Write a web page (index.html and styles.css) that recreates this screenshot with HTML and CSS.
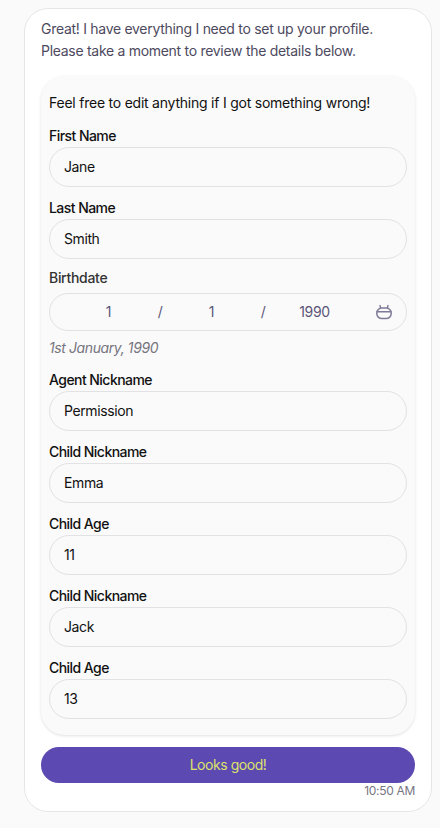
FILE: index.html
```html
<!DOCTYPE html>
<html lang="en">
<head>
  <meta charset="UTF-8">
  <meta name="viewport" content="width=device-width, initial-scale=1.0">
  <title>Review profile</title>
  <link rel="stylesheet" href="styles.css">
</head>
<body>
  <div class="bubble">
    <p class="intro">Great! I have everything I need to set up your profile.<br>Please take a moment to review the details below.</p>

    <!-- Profile form -->
    <div class="form-card">
      <p class="form-note">Feel free to edit anything if I got something wrong!</p>

      <div class="field">
        <div class="label">First Name</div>
        <div class="input">Jane</div>
      </div>
      <div class="field">
        <div class="label">Last Name</div>
        <div class="input">Smith</div>
      </div>

      <div class="field field-date">
        <div class="label label-plain">Birthdate</div>
        <div class="date-input">
          <span class="date-part">1</span>
          <span class="date-sep">/</span>
          <span class="date-part">1</span>
          <span class="date-sep">/</span>
          <span class="date-part">1990</span>
          <svg class="date-icon" viewBox="0 0 18 18" width="18" height="18" fill="none" stroke="#7f7a98" stroke-width="1.5" stroke-linecap="round">
            <rect x="1.8" y="5" width="14.4" height="10.6" rx="5"/>
            <path d="M2 8.8h14"/>
            <path d="M5.6 4.8 5 2.6"/>
            <path d="M12.4 4.8l.6-2.2"/>
          </svg>
        </div>
        <div class="date-hint">1st January, 1990</div>
      </div>

      <div class="field">
        <div class="label">Agent Nickname</div>
        <div class="input">Permission</div>
      </div>
      <div class="field">
        <div class="label">Child Nickname</div>
        <div class="input">Emma</div>
      </div>
      <div class="field">
        <div class="label">Child Age</div>
        <div class="input">11</div>
      </div>
      <div class="field">
        <div class="label">Child Nickname</div>
        <div class="input">Jack</div>
      </div>
      <div class="field">
        <div class="label">Child Age</div>
        <div class="input">13</div>
      </div>
    </div>

    <button class="confirm">Looks good!</button>
    <div class="time">10:50 AM</div>
  </div>
</body>
</html>
```

FILE: styles.css
```css
body {
  font-family: Inter, "Noto Sans", sans-serif;
  margin: 0;
  padding: 8px 8px 16px 24px;
  background-color: #fafafa;
}
.bubble {
  background-color: white;
  border: 1px solid #e6e6e8;
  border-radius: 24px;
  padding: 9px 16px 12px 16px;
}
.intro {
  margin: 0 0 14px 0;
  font-size: 14px;
  line-height: 22px;
  letter-spacing: -0.29px;
  color: #4d4a60;
}
.form-card {
  background-color: #fafafa;
  border-radius: 24px;
  box-shadow: 0 1px 3px rgba(0, 0, 0, 0.12);
  padding: 16px 8px 5px 8px;
}
.form-note {
  margin: 0 0 12px 0;
  font-size: 14px;
  line-height: 22px;
  letter-spacing: -0.23px;
  color: #111;
}
.field {
  margin-bottom: 11px;
}
.label {
  margin-bottom: 1px;
  font-size: 14px;
  line-height: 20px;
  font-weight: 500;
  letter-spacing: -0.55px;
  color: #111;
}
.label-plain {
  letter-spacing: -0.3px;
  color: #333;
}
.input {
  height: 40px;
  box-sizing: border-box;
  border: 1px solid #e2e2e4;
  border-radius: 20px;
  padding: 0 14px 2px 14px;
  display: flex;
  align-items: center;
  font-size: 14px;
  letter-spacing: -0.4px;
  color: #111;
}
.field-date {
  margin-top: -2px;
  margin-bottom: 12px;
}
.date-input {
  height: 38px;
  margin-top: 5px;
  box-sizing: border-box;
  border: 1px solid #e2e2e4;
  border-radius: 19px;
  padding: 0 13px 0 15px;
  display: flex;
  align-items: center;
  font-size: 14px;
  letter-spacing: -0.3px;
  color: #5a5678;
}
.date-part {
  flex: 1;
  text-align: center;
  margin-bottom: 2px;
}
.date-sep {
  width: 16px;
  text-align: center;
  margin-bottom: 2px;
}
.date-icon {
  margin-left: 17px;
}
.date-hint {
  margin-top: 7px;
  font-size: 14px;
  line-height: 20px;
  font-style: italic;
  letter-spacing: -0.4px;
  color: #77757f;
}
.confirm {
  display: block;
  width: 100%;
  height: 36px;
  margin-top: 12px;
  padding: 0 0 1px 0;
  border: none;
  border-radius: 18px;
  background-color: #5c49b2;
  color: #dde36b;
  font-family: inherit;
  font-size: 14px;
  letter-spacing: -0.45px;
}
.time {
  text-align: right;
  font-size: 12px;
  line-height: 16px;
  letter-spacing: -0.3px;
  color: #77757f;
}
```
